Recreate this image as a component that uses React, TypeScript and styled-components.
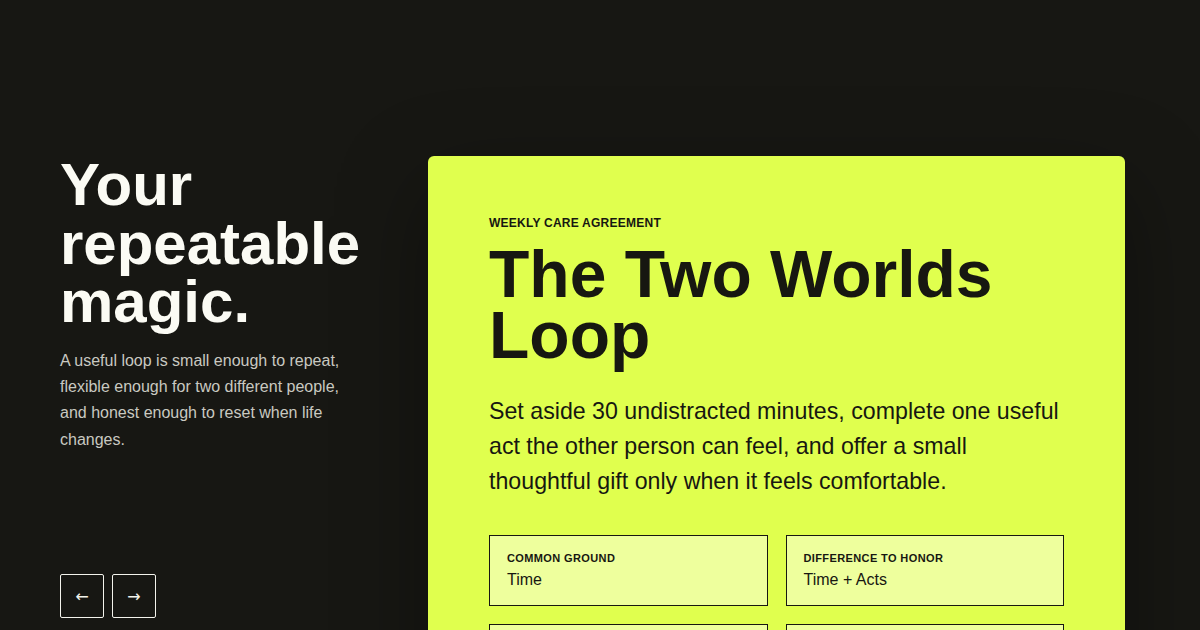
import React from "react";
import styled, { createGlobalStyle } from "styled-components";

const facts = [
  { label: "Common ground", value: "Time" },
  { label: "Difference to honor", value: "Time + Acts" },
  { label: "Your part", value: "One useful act" },
  { label: "Their part", value: "30 minutes" },
];

export default function App() {
  return (
    <>
      <GlobalStyle />
      <Section>
        <Intro>
          <Heading>Your repeatable magic.</Heading>
          <Lede>
            A useful loop is small enough to repeat, flexible enough for two different people,
            and honest enough to reset when life changes.
          </Lede>
          <Nav>
            <ArrowButton aria-label="Previous">←</ArrowButton>
            <ArrowButton aria-label="Next">→</ArrowButton>
          </Nav>
        </Intro>

        <Card>
          <Eyebrow>Weekly care agreement</Eyebrow>
          <Title>The Two Worlds Loop</Title>
          <Summary>
            Set aside 30 undistracted minutes, complete one useful act the other person can feel,
            and offer a small thoughtful gift only when it feels comfortable.
          </Summary>
          <FactGrid>
            {facts.map(({ label, value }) => (
              <Fact key={label}>
                <FactLabel>{label}</FactLabel>
                <FactValue>{value}</FactValue>
              </Fact>
            ))}
          </FactGrid>
        </Card>
      </Section>
    </>
  );
}

const GlobalStyle = createGlobalStyle`
  html, body {
    margin: 0;
    background: #171713;
  }
  body {
    font-family: "Liberation Sans", Arial, sans-serif;
    color: #fbfbf4;
  }
`;

const Section = styled.section`
  display: grid;
  grid-template-columns: 308px 1fr;
  column-gap: 60px;
  align-items: start;
  padding: 156px 75px 80px 60px;
`;

const Intro = styled.div`
  display: flex;
  flex-direction: column;
  height: 462px;
`;

const Heading = styled.h1`
  margin: 0;
  font-size: 60px;
  line-height: 0.975;
  font-weight: 700;
  color: #fbfbf4;
`;

const Lede = styled.p`
  margin: 16px 0 0;
  max-width: 300px;
  font-size: 16px;
  line-height: 1.65;
  color: #c9c9c1;
`;

const Nav = styled.nav`
  margin-top: auto;
  display: flex;
  gap: 8px;
`;

const ArrowButton = styled.button`
  width: 44px;
  height: 44px;
  display: flex;
  align-items: center;
  justify-content: center;
  padding: 0;
  background: transparent;
  border: 1px solid #f3f3ec;
  border-radius: 2px;
  color: #f3f3ec;
  font-family: "DejaVu Sans", sans-serif;
  font-size: 16px;
  cursor: pointer;
`;

const Card = styled.article`
  background: #e0ff4e;
  border-radius: 6px;
  padding: 60px 61px 64px;
  color: #171711;
  box-shadow: 0 30px 90px rgba(0, 0, 0, 0.35);
`;

const Eyebrow = styled.div`
  font-size: 12px;
  line-height: 1.2;
  font-weight: 700;
  letter-spacing: 0.02em;
  text-transform: uppercase;
`;

const Title = styled.h2`
  margin: 14px 0 0;
  font-size: 66px;
  line-height: 0.917;
  font-weight: 700;
`;

const Summary = styled.p`
  margin: 29px 0 0;
  font-size: 23.2px;
  line-height: 35px;
`;

const FactGrid = styled.div`
  margin-top: 36px;
  display: grid;
  grid-template-columns: 1fr 1fr;
  gap: 18px;
`;

const Fact = styled.div`
  border: 1px solid #171711;
  background: rgba(255, 255, 255, 0.45);
  padding: 16px 17px 15px;
`;

const FactLabel = styled.div`
  font-size: 11px;
  line-height: 1.2;
  font-weight: 700;
  letter-spacing: 0.035em;
  text-transform: uppercase;
`;

const FactValue = styled.div`
  margin-top: 4px;
  font-size: 16px;
  line-height: 1.25;
`;
